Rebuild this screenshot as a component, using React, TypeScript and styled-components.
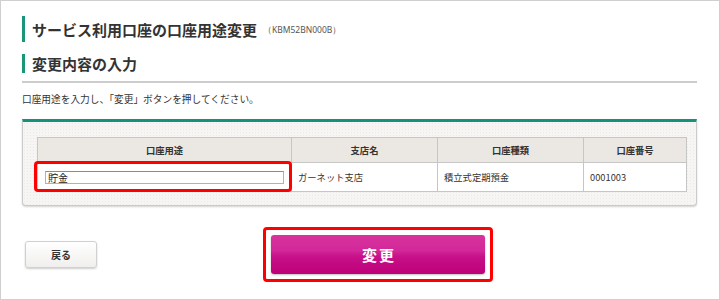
import styled, { createGlobalStyle } from "styled-components";

const GlobalStyle = createGlobalStyle`
  body {
    margin: 0;
    background: #fff;
    font-family: "Noto Sans CJK JP", "Noto Sans", sans-serif;
    color: #333;
  }
`;

const Frame = styled.div`
  width: 720px;
  height: 300px;
  box-sizing: border-box;
  border: 1px solid #cfcfcf;
  padding: 15px 22px 0 21px;
`;

const PageTitle = styled.h1`
  margin: 0;
  height: 26px;
  display: flex;
  align-items: center;
  gap: 6px;
  border-left: 3px solid #1a977a;
  padding-left: 7px;
  font-size: 15px;
  font-weight: 700;
  line-height: 1;
  color: #333;
  small {
    font-size: 8.5px;
    font-weight: 400;
    font-family: "Noto Sans", sans-serif;
    color: #555;
    padding-top: 3px;
  }
`;

const SectionHead = styled.div`
  margin-top: 12px;
  padding-bottom: 8px;
  border-bottom: 2px solid #cccccc;
`;

const SubTitle = styled.h2`
  margin: 0;
  height: 19px;
  display: flex;
  align-items: center;
  border-left: 3px solid #1a977a;
  padding-left: 7px;
  font-size: 15px;
  font-weight: 700;
  line-height: 1;
  color: #333;
`;

const Lead = styled.p`
  margin: 9px 0 0;
  font-size: 9.7px;
  line-height: 14px;
  color: #333;
`;

const Panel = styled.div`
  margin-top: 13px;
  border: 1px solid #cbcbcb;
  border-top: 3px solid #16917a;
  border-radius: 0 0 4px 4px;
  background-color: #f6f5f3;
  background-image: radial-gradient(#eceae6 0.6px, transparent 0.6px);
  background-size: 3px 3px;
  box-shadow: 0 1px 2px rgba(0, 0, 0, 0.18);
  padding: 15px 14px 13px;
`;

const Table = styled.table`
  width: 645px;
  border-collapse: collapse;
  table-layout: fixed;
  font-size: 9.3px;
`;

const Th = styled.th<{ $w: number }>`
  width: ${(p) => p.$w}px;
  height: 24px;
  padding: 0;
  border: 1px solid #c6c6c6;
  background: #ebe7e2;
  font-weight: 700;
  text-align: center;
  color: #333;
`;

const Td = styled.td`
  position: relative;
  height: 28px;
  padding: 0 6px;
  border: 1px solid #c6c6c6;
  background: #fff;
  color: #333;
`;

const InputCell = styled(Td)`
  padding: 0 7px;
`;

const UseInput = styled.input`
  display: block;
  width: 239px;
  height: 13px;
  box-sizing: border-box;
  margin: 0;
  padding: 0 2px;
  border: 1px solid #b2b2b2;
  border-top-color: #8c8c8c;
  font-family: "Noto Sans CJK JP", sans-serif;
  font-size: 10px;
  line-height: 11px;
  color: #222;
  background: #fff;
  outline: none;
`;

const Highlight = styled.span`
  position: absolute;
  left: -4px;
  right: -1px;
  top: -2px;
  bottom: -1px;
  border: 3px solid #ff0000;
  border-radius: 4px;
  pointer-events: none;
`;

const Actions = styled.div`
  margin-top: 21px;
  display: flex;
  align-items: center;
  gap: 166px;
  padding-left: 3px;
`;

const BackButton = styled.button`
  width: 72px;
  height: 27px;
  border: 1px solid #d0d0d0;
  border-radius: 3px;
  background: linear-gradient(#ffffff, #f0efed);
  box-shadow: 0 1px 2px rgba(0, 0, 0, 0.2);
  font-family: "Noto Sans CJK JP", sans-serif;
  font-size: 10px;
  font-weight: 700;
  color: #333;
  padding: 0;
`;

const Marker = styled.div`
  border: 3px solid #ff0000;
  border-radius: 4px;
  padding: 5px;
`;

const SubmitButton = styled.button`
  display: block;
  width: 214px;
  height: 39px;
  border: none;
  border-radius: 3px;
  background: linear-gradient(
    #d8339f 0%,
    #d22899 40%,
    #c71089 55%,
    #bd0079 100%
  );
  box-shadow: 0 1px 2px rgba(0, 0, 0, 0.25);
  font-family: "Noto Sans CJK JP", sans-serif;
  font-size: 15px;
  font-weight: 700;
  letter-spacing: 2px;
  color: #fff;
  padding: 0 0 0 2px;
`;

const columns = [
  { label: "口座用途", w: 253 },
  { label: "支店名", w: 145 },
  { label: "口座種類", w: 145 },
  { label: "口座番号", w: 102 },
];

const App = () => {
  return (
    <>
      <GlobalStyle />
      <Frame>
        <PageTitle>
          サービス利用口座の口座用途変更<small>（KBM52BN000B）</small>
        </PageTitle>
        <SectionHead>
          <SubTitle>変更内容の入力</SubTitle>
        </SectionHead>
        <Lead>口座用途を入力し、「変更」ボタンを押してください。</Lead>
        <Panel>
          <Table>
            <thead>
              <tr>
                {columns.map((c) => (
                  <Th key={c.label} $w={c.w}>
                    {c.label}
                  </Th>
                ))}
              </tr>
            </thead>
            <tbody>
              <tr>
                <InputCell>
                  <UseInput defaultValue="貯金" />
                  <Highlight />
                </InputCell>
                <Td>ガーネット支店</Td>
                <Td>積立式定期預金</Td>
                <Td>0001003</Td>
              </tr>
            </tbody>
          </Table>
        </Panel>
        <Actions>
          <BackButton>戻る</BackButton>
          <Marker>
            <SubmitButton>変更</SubmitButton>
          </Marker>
        </Actions>
      </Frame>
    </>
  );
};

export default App;
